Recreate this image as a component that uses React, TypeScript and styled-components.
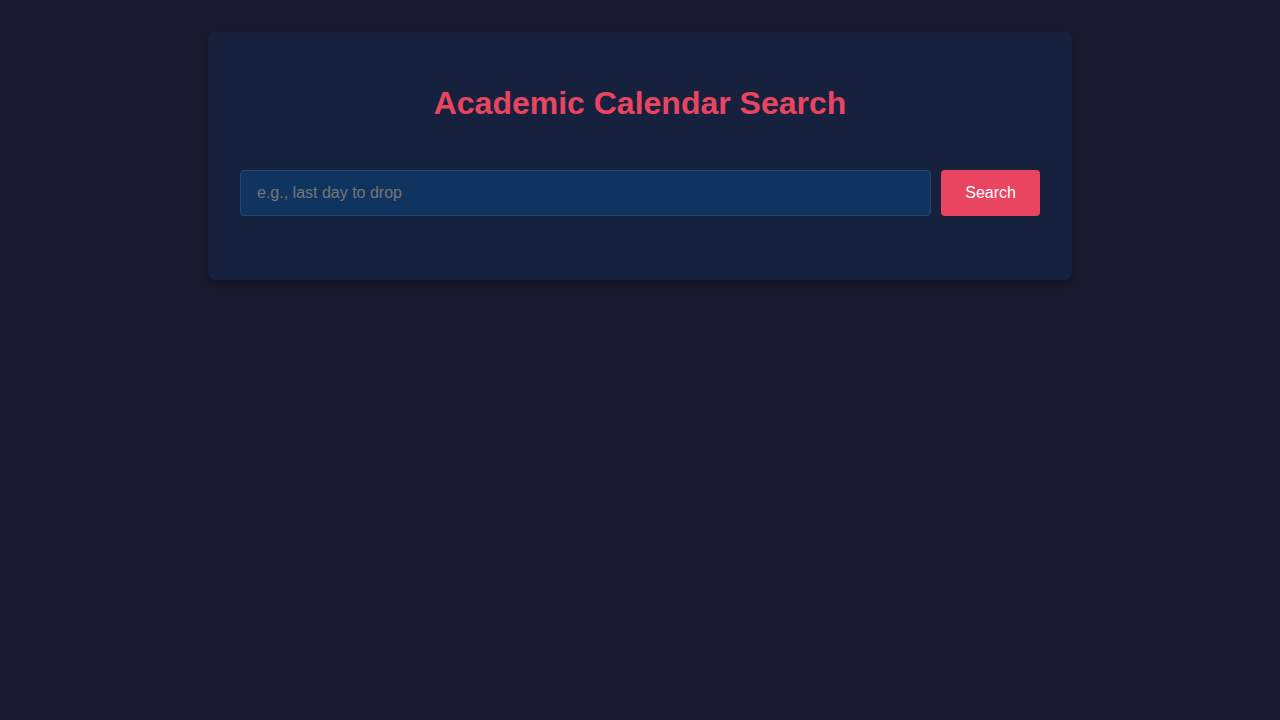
import React from 'react';
import styled, { createGlobalStyle } from 'styled-components';

const GlobalStyle = createGlobalStyle`
  html, body {
    margin: 0;
    padding: 0;
    background-color: #1a1a2e;
    font-family: 'Liberation Sans', Arial, sans-serif;
    color: #eaeaea;
  }
  body {
    min-height: 100vh;
  }
  * {
    box-sizing: border-box;
  }
`;

const Page = styled.div`
  padding: 32px 16px;
`;

const Card = styled.div`
  max-width: 864px;
  margin: 0 auto;
  padding: 32px;
  background-color: #16213e;
  border-radius: 8px;
  box-shadow: 0 4px 12px rgba(0, 0, 0, 0.3);
`;

const Title = styled.h1`
  margin: 21px 0 48px;
  text-align: center;
  color: #e94560;
  font-size: 32px;
  font-weight: bold;
  line-height: 37px;
`;

const SearchForm = styled.form`
  display: flex;
  gap: 10px;
  margin-bottom: 32px;
`;

const SearchInput = styled.input`
  flex: 1;
  height: 46px;
  padding: 0 16px;
  font-family: inherit;
  font-size: 16px;
  color: #eaeaea;
  background-color: #0f3460;
  border: 1px solid #2a4470;
  border-radius: 4px;
  outline: none;

  &::placeholder {
    color: #767676;
  }
`;

const SearchButton = styled.button`
  height: 46px;
  padding: 0 24px;
  font-family: inherit;
  font-size: 16px;
  color: #ffffff;
  background-color: #e94560;
  border: none;
  border-radius: 4px;
  cursor: pointer;
`;

export default function App() {
  return (
    <>
      <GlobalStyle />
      <Page>
        <Card>
          <Title>Academic Calendar Search</Title>
          <SearchForm onSubmit={(e) => e.preventDefault()}>
            <SearchInput type="text" placeholder="e.g., last day to drop" />
            <SearchButton type="submit">Search</SearchButton>
          </SearchForm>
        </Card>
      </Page>
    </>
  );
}
